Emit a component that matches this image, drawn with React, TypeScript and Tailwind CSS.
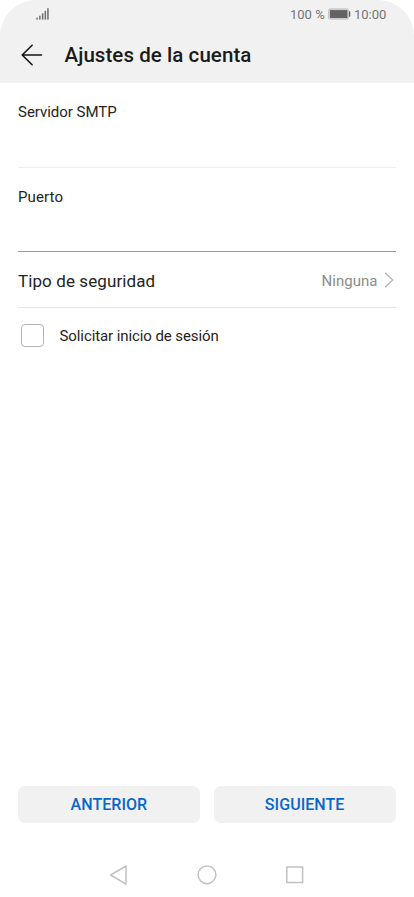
import React from 'react';

function SignalIcon() {
  return (
    <svg className="h-3 w-[14px]" viewBox="0 0 14 12" fill="#6f6f6f">
      <rect x="0.3" y="9.6" width="1.5" height="2" />
      <rect x="3.1" y="7.7" width="1.5" height="3.9" />
      <rect x="5.9" y="5.3" width="1.5" height="6.3" />
      <rect x="8.6" y="2.8" width="1.5" height="8.8" />
      <rect x="11.2" y="0.2" width="1.5" height="11.4" />
    </svg>
  );
}

function BatteryIcon() {
  return (
    <svg className="h-3 w-[23px]" viewBox="0 0 23 12">
      <rect x="0.6" y="0.9" width="20" height="10.2" rx="1.5" fill="#d2d2d2" stroke="#c2c2c2" strokeWidth="1" />
      <rect x="2" y="2.1" width="17.4" height="7.9" fill="#636363" />
      <path d="M21 3.3h.5q.8 0 .8.8v3.8q0 .8-.8.8H21z" fill="#636363" />
    </svg>
  );
}

function StatusBar() {
  return (
    <div className="flex h-7 items-center justify-between pr-[27px] pl-9 text-[13px] leading-7 text-[#737373]">
      <SignalIcon />
      <div className="flex items-center">
        <span className="w-[38px] pt-px">100 %</span>
        <BatteryIcon />
        <span className="ml-[3px] w-[33px] pt-px">10:00</span>
      </div>
    </div>
  );
}

function Field({ label, line }: { label: string; line: string }) {
  return (
    <label className={`block border-b ${line}`}>
      <span className="block text-[15px] leading-5">{label}</span>
    </label>
  );
}

function NavButton({ children }: { children: React.ReactNode }) {
  return (
    <button className="h-[37px] flex-1 rounded-[7px] bg-[#f1f1f1] pt-px text-[16px] leading-[36px] font-medium tracking-[0.05px] text-[#0868c8]">
      {children}
    </button>
  );
}

export default function App() {
  return (
    <div className="flex h-[897px] w-[414px] flex-col overflow-hidden bg-white font-['Roboto',sans-serif] text-[#242424]">
      <header className="h-[83px] rounded-t-[36px] bg-[#f1f1f1]">
        <StatusBar />
        <div className="flex h-[54px] items-center pl-[21px]">
          <svg className="h-[22px] w-[22px]" viewBox="0 0 22 22" fill="none" stroke="#151515" strokeWidth="1.6" strokeLinecap="round" strokeLinejoin="round">
            <path d="M20.5 11H1.2M11.1 1.2L1.2 11l9.9 9.8" />
          </svg>
          <h1 className="ml-[21.5px] text-[20.5px] font-medium tracking-[0.07px] whitespace-nowrap text-[#1b1b1b]">Ajustes de la cuenta</h1>
        </div>
      </header>
      <main className="flex flex-col pr-[18.5px] pl-[18px]">
        <Field label="Servidor SMTP" line="h-[85px] border-[#eeeeee] pt-[19px] tracking-[-0.03px]" />
        <Field label="Puerto" line="h-[84px] border-[#9c9c9c] pt-[19px] tracking-[0.1px]" />
        <div className="flex h-14 items-center justify-between border-b border-[#e4e4e4] pt-[3px]">
          <span className="pt-px text-[17px] tracking-[0.1px]">Tipo de seguridad</span>
          <div className="flex items-center text-[15px] text-[#8b8b8b]">
            <span className="tracking-[0.02px]">Ninguna</span>
            <svg className="mr-[2px] mb-[2px] ml-[6px] h-4 w-[10px]" viewBox="0 0 10 16" fill="none" stroke="#b7b7b7" strokeWidth="1.4">
              <path d="M1 .7L8.7 8 1 15.3" />
            </svg>
          </div>
        </div>
        <label className="flex h-14 items-center pl-[3px]">
          <span className="mb-px h-[23px] w-[23px] rounded-[4px] border border-[#b4b4b4]" />
          <span className="ml-[15.5px] text-[15px] tracking-[-0.09px]">Solicitar inicio de sesión</span>
        </label>
      </main>
      <div className="mt-auto flex gap-[14px] pr-[18.5px] pl-[18px]">
        <NavButton>ANTERIOR</NavButton>
        <NavButton>SIGUIENTE</NavButton>
      </div>
      <nav className="flex h-[74px] items-center justify-center pt-[30px]">
        <svg className="h-6 w-[200px]" viewBox="0 0 200 24" fill="none" stroke="#c1c1c1" strokeWidth="1.5" strokeLinejoin="round">
          <path d="M3.6 12L19 3v18.2z" />
          <circle cx="100" cy="11.8" r="8.9" />
          <rect x="179.8" y="4.1" width="15.8" height="15.4" />
        </svg>
      </nav>
    </div>
  );
}
